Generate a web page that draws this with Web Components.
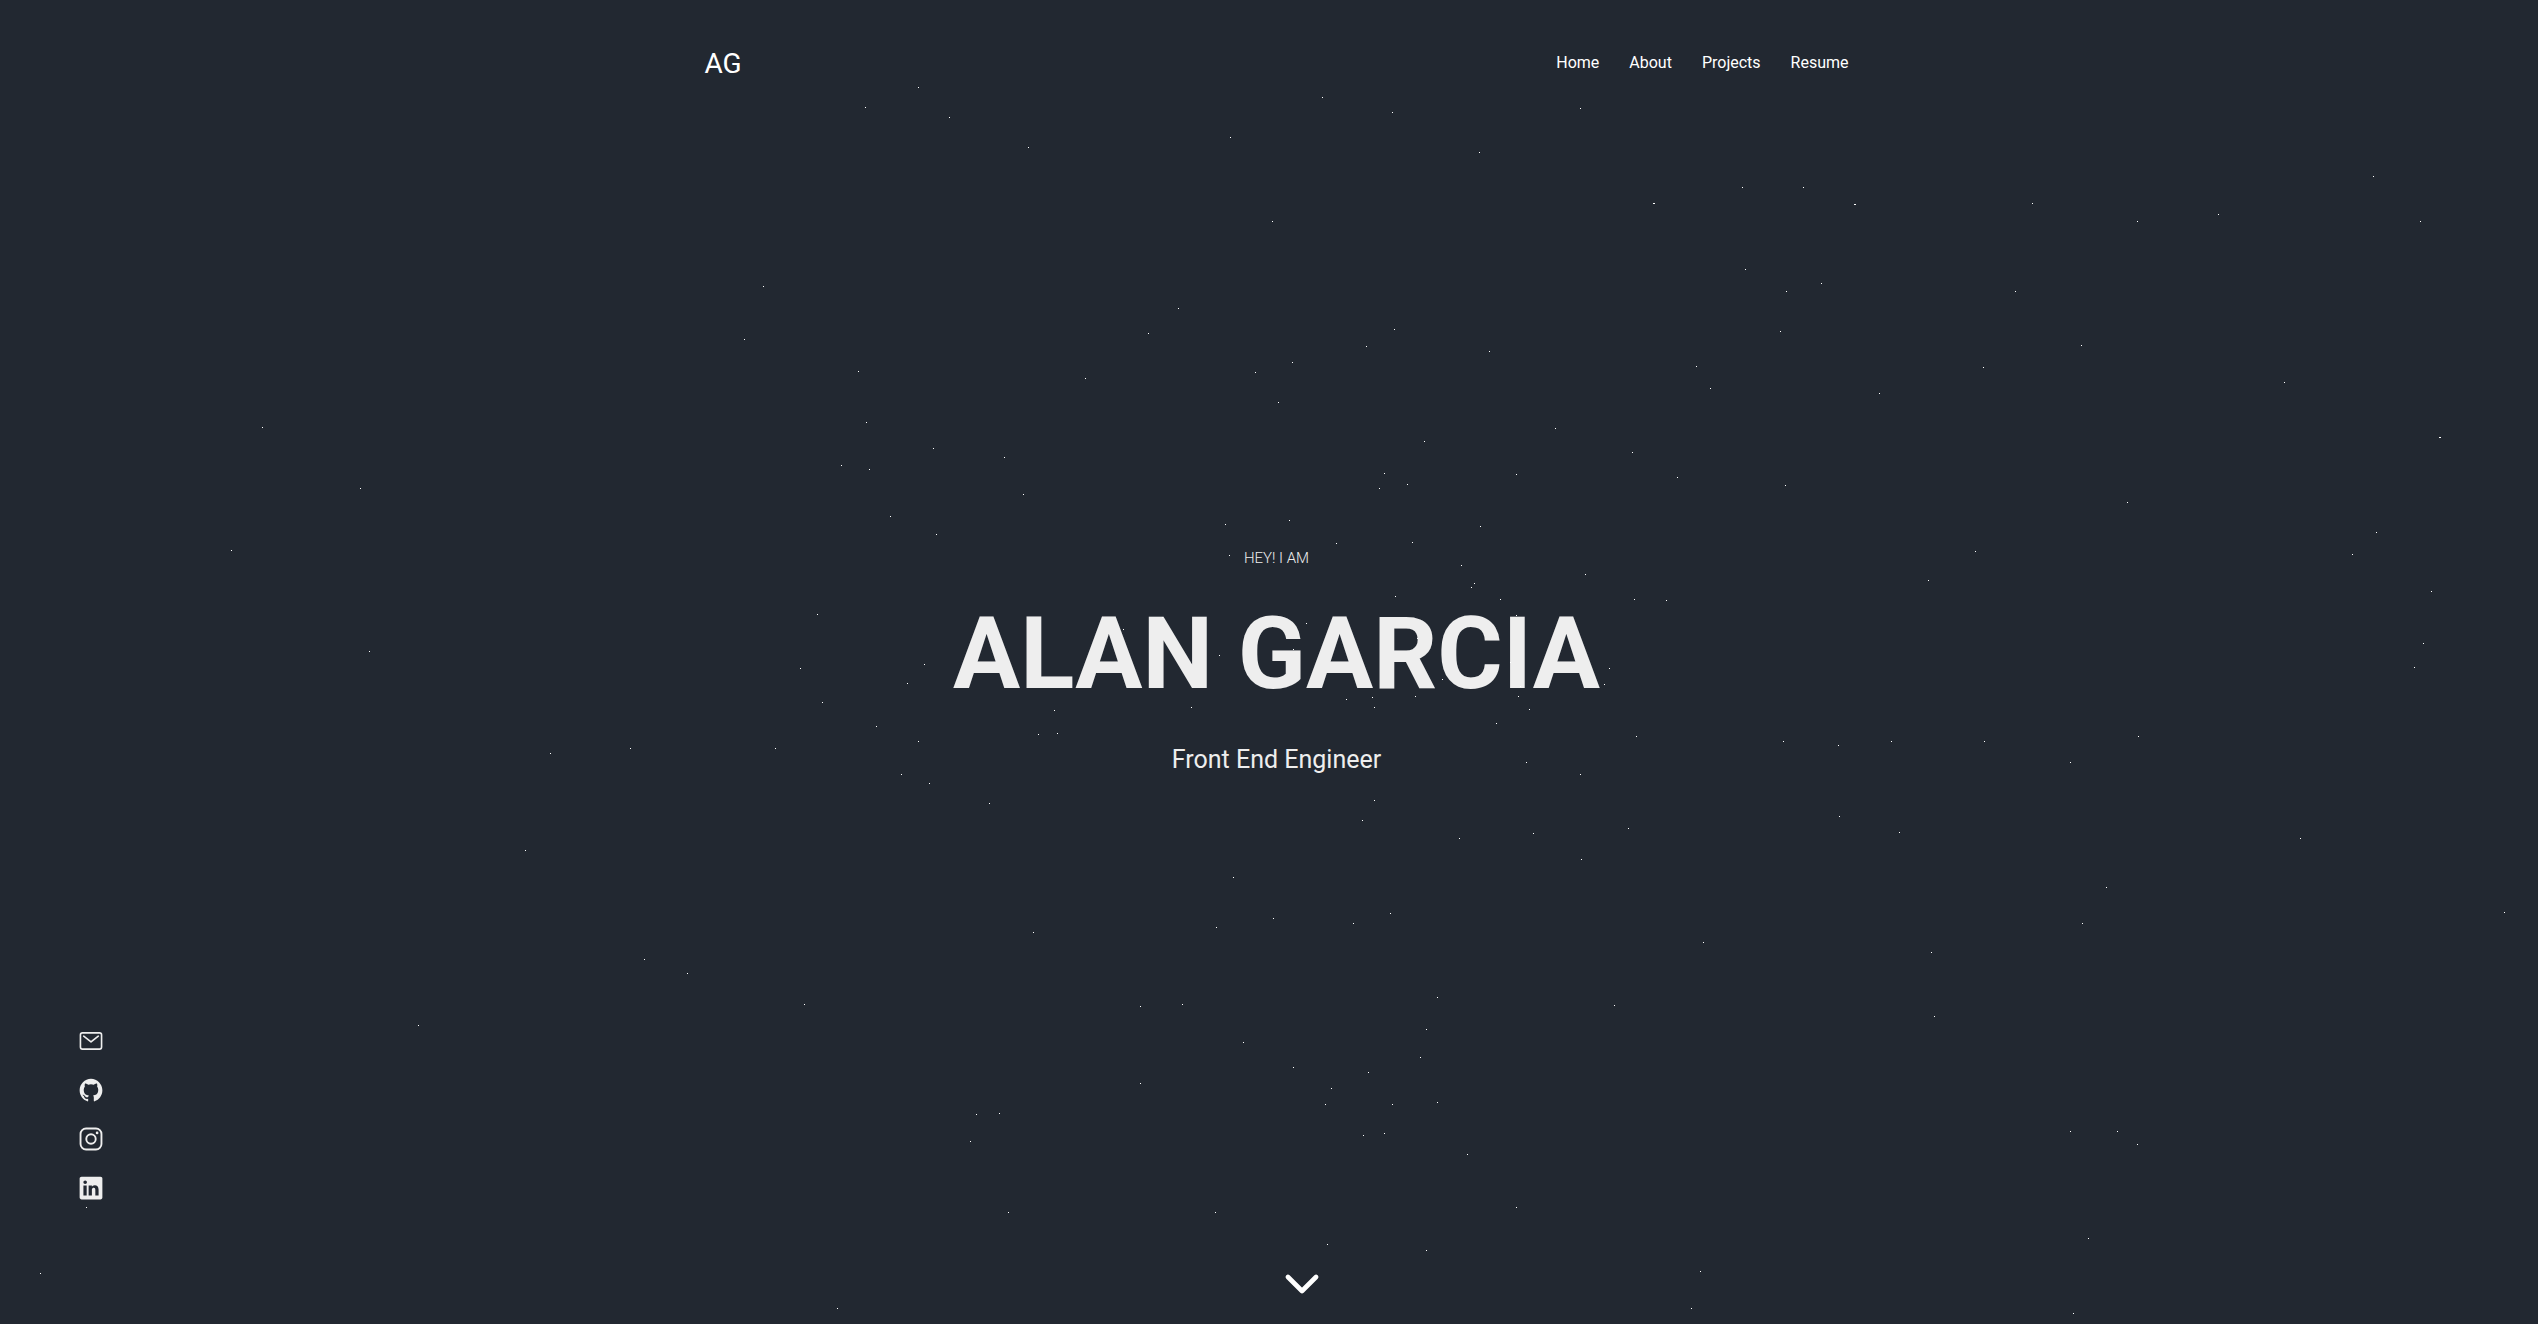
<!DOCTYPE html>
<html lang="en">
<head>
<meta charset="utf-8">
<meta name="viewport" content="width=device-width, initial-scale=1">
<title>Alan Garcia</title>
<style>
  body { margin: 0; background: #222831; color: #eeeeee; font-family: Roboto, "Liberation Sans", sans-serif; }
</style>
</head>
<body>
<portfolio-page>
  <site-header slot="header"></site-header>
  <hero-intro>
    <span slot="greeting">HEY! I AM</span>
    <span slot="name">ALAN GARCIA</span>
    <span slot="role">Front End Engineer</span>
  </hero-intro>
  <scroll-cue slot="footer"></scroll-cue>
</portfolio-page>
<social-links></social-links>

<script>
const define = (name, html, setup) => {
  const template = document.createElement('template');
  template.innerHTML = html;
  customElements.define(name, class extends HTMLElement {
    connectedCallback() {
      if (this.shadowRoot) return;
      const root = this.attachShadow({ mode: 'open' });
      root.append(template.content.cloneNode(true));
      if (setup) setup(root);
    }
  });
};

// Star positions on a 1568 x 818 field, stretched to the window.
const STARS = [
[567,53.5],[534.5,66],[586,72.5],[635,91],[760,84.5],[817,60],[860,69],[914,94],[976,66.5],[786,136.5],
[1076.2,115.7],[1114,115.7],[1021.3,125.4,2],[1145.3,126,2],[1255.5,125.5],[1320,136.5],[1370.5,132],[1466,108.5],[1495,136.5],
[1078.3,166.3],[1103.5,180],[1125.2,175.1],[1245,180],[1100,204.6],[1285.5,213],[1225,227],[1411,236],[1161,243],[1507,270,2],
[471.5,177],[459.5,209.5],[728,190],[709,205.5],[670.5,233.5],[530,229.5],[861,203.5],[844,214],[920,217],[798.5,223.5],[775.5,230],[789.5,248.5],
[1048,226],[1056.5,239.5],[162,264],[222.5,301.5],[143,340],[535,261],[576.5,276.5],[620.5,282.5],[519.5,287],[537,290],[632,305.5],[550,319],[578,330],
[961,264.5],[1008,279],[1036,295],[1103,299.5],[1314,310],[879.5,272.6],[855.1,292.4],[852,301.7],[869.3,299.1],[936.6,292.7],[914.5,325],
[825.5,335.4],[872.5,334.9],[796.5,321.5],[757,324],[759,343],[902.5,349],[909,362.6],[910.9,359.9],[862,368.2],[927,369.8],[979,354.8],[1009.5,370],[1029.5,370.5],
[1220,340.5],[1191,358.5],[1453,342],[1468,328.5],[1502,365],[1497,397.5],[1491.5,412],
[505,379.5],[228,402],[494,413],[571,410],[560.5,422],[508,434],[541.5,448.5],[567,458],[479,462],[389.5,462],[340,465.5],[556.5,478],[574,484],[611,496],[324.5,525],
[936.8,380.2],[718,381],[693.5,388.5],[807,385.2],[799,400.8],[753,404.4],[875.5,394],[933,409],[990.8,422.4],[994,413],[890.7,419.7],[939,424.1],
[937.8,430.3],[874.5,430.3],[831.8,432],[847.5,430.8],[849,436.8],[944.8,437.9],[736,436.5],[651.2,438.5],[653.3,452.6],[641,453.5],[924.4,446.5],[943,470.7],[976,478.2],
[1011,455],[1101.5,457.5],[1135.5,460],[1168,458],[1226,457.5],[1279,471],[1321,455],[1136,504],[1173,514],[1421,518],[1301,548],[1286,570],[1193,588],[1195,627.5],[1547,563.5],
[849,494.5],[841.5,506.5],[901.5,517.5],[947,514.5],[1006,511.5],[976.5,531],[761.5,542],[786.5,567],[751.5,573],[836,570],[859,564],[638,576],[1052,582],[997,621],
[398,592.5],[424.5,601],[496.5,620],[258,633],[704.5,621.5],[730,620.5],[888,616],[881,636],[877,653],[768,644],[799,659.5],[845,662],[704.5,669],[822,672],[818.5,682],[860,682],[888,681],
[603,688.5],[617,687.5],[599,705],[842,701],[855,700],[906.5,713],[1279,699],[1308,698.5],[1320.5,706.5],[623,748.5],[750.5,748.5],[936.5,745.5],[820,768.5],[881,772],[1290,765],[1050,785],[1045,808],[1281,811],
[517,808],[53.1,745.7],[24.5,786.5]
];

define('star-field', `
  <style>
    :host { position: fixed; inset: 0; overflow: hidden; pointer-events: none; }
    svg { display: block; width: 100%; height: 100%; fill: #fff; shape-rendering: crispEdges; }
  </style>
  <svg aria-hidden="true"></svg>`, root => {
  const svg = root.querySelector('svg');
  const draw = () => {
    const sx = innerWidth / 1568, sy = innerHeight / 818;
    svg.innerHTML = STARS.map(([x, y, w = 1]) =>
      `<rect x="${Math.round(x * sx)}" y="${Math.round(y * sy)}" width="${w}" height="1"/>`).join('');
  };
  draw();
  addEventListener('resize', draw);
});

define('portfolio-page', `
  <style>
    :host { display: grid; grid-template-rows: auto 1fr auto; min-height: 100vh; padding-left: 15px; box-sizing: border-box; }
    main { display: grid; place-items: center; padding-bottom: 22px; }
  </style>
  <star-field></star-field>
  <slot name="header"></slot>
  <main><slot></slot></main>
  <slot name="footer"></slot>`);

define('site-header', `
  <style>
    :host { display: block; padding: 44px 16px 0; }
    header { max-width: 1144px; margin: 0 auto; display: flex; align-items: flex-start; justify-content: space-between; line-height: 38px; }
    a { color: #fff; text-decoration: none; }
    .brand { font-size: 28px; line-height: 40px; }
    ul { display: flex; gap: 30px; margin: 0; padding: 0; list-style: none; font-size: 16px; }
  </style>
  <header>
    <a class="brand" href="#">AG</a>
    <nav><ul>
      <li><a href="#home">Home</a></li>
      <li><a href="#about">About</a></li>
      <li><a href="#projects">Projects</a></li>
      <li><a href="#resume">Resume</a></li>
    </ul></nav>
  </header>`);

define('hero-intro', `
  <style>
    :host { display: block; text-align: center; }
    p, h1 { margin: 0; }
    .greeting { font-size: 15px; font-weight: 300; line-height: 24px; }
    h1 { font-size: 100px; font-weight: 700; line-height: 120px; margin: 24px 0 30px; }
    .role { font-size: 25px; line-height: 32px; }
  </style>
  <p class="greeting"><slot name="greeting"></slot></p>
  <h1><slot name="name"></slot></h1>
  <p class="role"><slot name="role"></slot></p>`);

define('scroll-cue', `
  <style>
    :host { display: flex; justify-content: center; padding: 0 0 15px 51px; }
    a { display: block; color: #fff; }
    svg { display: block; width: 50px; height: 50px; }
  </style>
  <a href="#about" aria-label="Scroll down"><svg viewBox="0 0 512 512" fill="none" stroke="currentColor" stroke-width="48" stroke-linecap="round" stroke-linejoin="round"><path d="M112 184l144 144 144-144"/></svg></a>`);

define('social-links', `
  <style>
    :host { position: fixed; left: 78px; bottom: 123px; display: flex; flex-direction: column; gap: 23px; }
    a { display: block; color: inherit; }
    svg { display: block; width: 26px; height: 26px; fill: currentColor; }
    .line { fill: none; stroke: currentColor; stroke-width: 32; stroke-linecap: round; stroke-linejoin: round; }
  </style>
  <a href="#email" aria-label="Email"><svg viewBox="0 0 512 512"><rect class="line" x="48" y="96" width="416" height="320" rx="40"/><path class="line" d="M112 160l144 112 144-112"/></svg></a>
  <a href="#github" aria-label="GitHub"><svg viewBox="0 0 512 512"><path d="M256 32C132.3 32 32 134.9 32 261.7c0 101.5 64.2 187.5 153.2 217.9a17.56 17.56 0 003.8.4c8.3 0 11.5-6.1 11.5-11.4 0-5.5-.2-19.9-.3-39.1a102.4 102.4 0 01-22.6 2.7c-43.1 0-52.9-33.5-52.9-33.5-10.2-26.5-24.9-33.6-24.9-33.6-19.5-13.7-.1-14.1 1.4-14.1h.1c22.5 2 34.3 23.8 34.3 23.8 11.2 19.6 26.2 25.1 39.6 25.1a63 63 0 0025.6-6c2-14.8 7.8-24.9 14.2-30.7-49.7-5.8-102-25.5-102-113.5 0-25.1 8.7-45.6 23-61.6-2.3-5.8-10-29.2 2.2-60.8a18.64 18.64 0 015-.5c8.1 0 26.4 3.1 56.6 24.1a208.21 208.21 0 01112.2 0c30.2-21 48.5-24.1 56.6-24.1a18.64 18.64 0 015 .5c12.2 31.6 4.5 55 2.2 60.8 14.3 16.1 23 36.6 23 61.6 0 88.2-52.4 107.6-102.3 113.3 8 7.1 15.2 21.1 15.2 42.5 0 30.7-.3 55.5-.3 63 0 5.4 3.1 11.5 11.4 11.5a19.35 19.35 0 004-.4C415.9 449.2 480 363.1 480 261.7 480 134.9 379.7 32 256 32z"/></svg></a>
  <a href="#instagram" aria-label="Instagram"><svg viewBox="0 0 512 512"><rect class="line" x="50" y="50" width="412" height="412" rx="108" style="stroke-width:37"/><circle class="line" cx="256" cy="256" r="93" style="stroke-width:37"/><circle cx="376" cy="136" r="27"/></svg></a>
  <a href="#linkedin" aria-label="LinkedIn"><svg viewBox="0 0 512 512"><path d="M444.17 32H70.28C49.85 32 32 46.7 32 66.89v374.72C32 461.91 49.85 480 70.28 480h373.78c20.54 0 35.94-18.21 35.94-38.39V66.89C480.12 46.7 464.6 32 444.17 32zm-273.3 373.43h-64.18V205.88h64.18zM141 175.54h-.46c-20.54 0-33.84-15.29-33.84-34.43 0-19.49 13.65-34.42 34.65-34.42s33.85 14.82 34.31 34.42c-.01 19.14-13.31 34.43-34.66 34.43zm264.43 229.89h-64.18V296.32c0-26.14-9.34-44-32.56-44-17.74 0-28.24 12-32.91 23.69-1.75 4.2-2.22 9.92-2.22 15.76v113.66h-64.18V205.88h64.18v27.77c9.34-13.3 23.93-32.44 57.88-32.44 42.13 0 74 27.77 74 87.64z"/></svg></a>`);
</script>
</body>
</html>
